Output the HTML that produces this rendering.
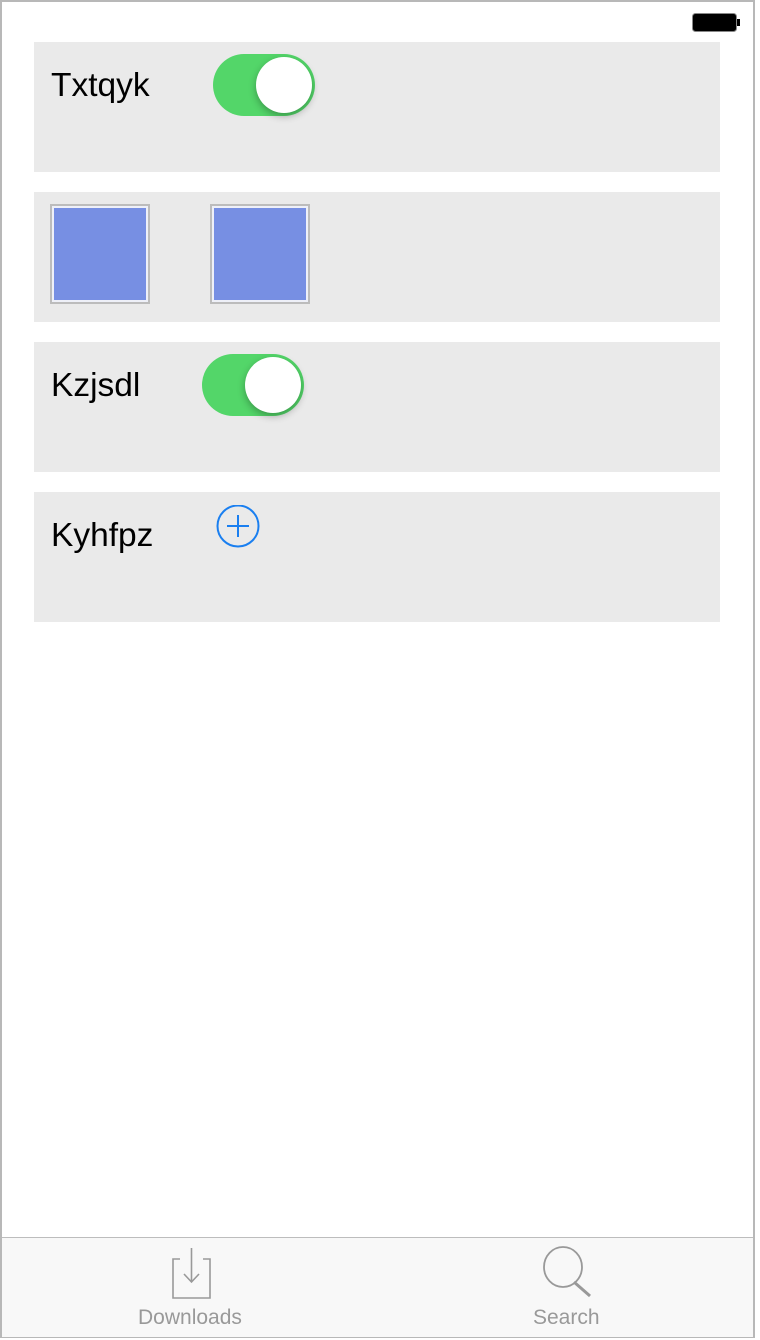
<!DOCTYPE html><html><head><style>
body{margin:0;width:760px;height:1340px;background:#fff;font-family:"Liberation Sans",sans-serif;position:relative;overflow:hidden}
.frame{position:absolute;left:0;top:0;width:751px;height:1334px;border:2px solid #b8b8b8}
.p{position:absolute;left:34px;width:686px;height:130px;background:#eaeaea}
.t{position:absolute;left:17px;top:25px;font-size:33.5px;color:#000}
.tg{position:absolute;width:102px;height:62px;border-radius:31px;background:#53d669}
.tg::after{content:"";position:absolute;right:3px;top:3px;width:56px;height:56px;border-radius:50%;background:#fff;box-shadow:0 3px 8px rgba(0,0,0,.3)}
.sq{position:absolute;top:12px;width:96px;height:96px;border:2px solid #bcbcbc;background:#eef0f8;box-sizing:border-box}
.sq::after{content:"";position:absolute;left:2px;top:2px;right:2px;bottom:2px;background:#778fe3}
.tab{position:absolute;left:2px;top:1237px;width:751px;height:99px;background:#f8f8f8;border-top:1px solid #bdbdbd}
.lb{position:absolute;font-size:21px;color:#999;top:1306px}
</style></head><body>
<div class="frame"></div>
<svg style="position:absolute;left:690px;top:12px" width="52" height="22"><rect x="2.5" y="1.5" width="44" height="18" rx="3" fill="#000" stroke="#888" stroke-width="1"/><rect x="47" y="7" width="3" height="7" fill="#000"/></svg>
<div class="p" style="top:42px"><div class="t">Txtqyk</div><div class="tg" style="left:179px;top:12px"></div></div>
<div class="p" style="top:192px"><div class="sq" style="left:16px;width:100px;height:100px"></div><div class="sq" style="left:176px;width:100px;height:100px"></div></div>
<div class="p" style="top:342px"><div class="t">Kzjsdl</div><div class="tg" style="left:168px;top:12px"></div></div>
<div class="p" style="top:492px"><div class="t">Kyhfpz</div>
<svg style="position:absolute;left:181px;top:13px" width="46" height="46"><circle cx="23" cy="21" r="20.5" fill="none" stroke="#1a7ff0" stroke-width="2"/><path d="M12 21H34M23 10V32" stroke="#1a7ff0" stroke-width="2"/></svg></div>
<div class="tab"></div>
<svg style="position:absolute;left:160px;top:1245px" width="60" height="56" fill="none" stroke="#999" stroke-width="1.6"><path d="M20 14H13V53H50V14H43"/><path d="M31.5 3V37M24 29L31.5 37L39 29"/></svg>
<svg style="position:absolute;left:530px;top:1240px" width="70" height="62" fill="none" stroke="#999" stroke-width="1.8"><ellipse cx="33" cy="27" rx="19" ry="20"/><path d="M44 42L60 56" stroke-width="3"/></svg>
<div class="lb" style="left:138px">Downloads</div>
<div class="lb" style="left:533px">Search</div>
</body></html>
